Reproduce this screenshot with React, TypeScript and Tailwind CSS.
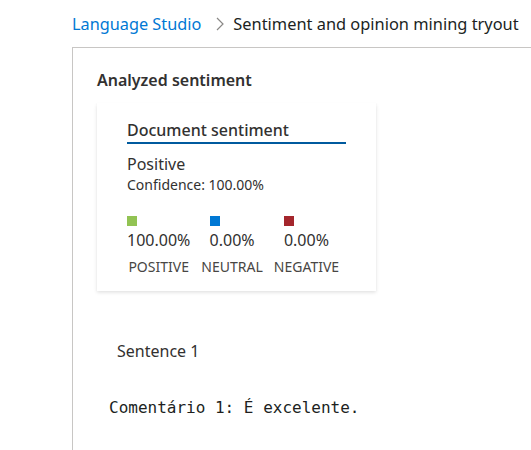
import React from "react";

export default function App() {
  const sans = { fontFamily: '"Noto Sans", "Open Sans", sans-serif' };
  const items = [
    { c: "#92c353", v: "100.00%", l: "POSITIVE" },
    { c: "#0078d4", v: "0.00%", l: "NEUTRAL" },
    { c: "#a4262c", v: "0.00%", l: "NEGATIVE" },
  ];
  return (
    <div className="w-[531px] h-[450px] bg-white overflow-hidden text-[#323130]" style={sans}>
      <div className="flex items-center h-[47px] pl-[72px] pt-[1px]">
        <span className="text-[16.3px] text-[#0078d4]">Language Studio</span>
        <svg width="10" height="14" viewBox="0 0 10 14" className="ml-[14px] mr-[8px]">
          <path d="M2 1 L8 7 L2 13" fill="none" stroke="#8a8886" strokeWidth="1.2" />
        </svg>
        <span className="text-[16.4px] text-[#201f1e] whitespace-nowrap">Sentiment and opinion mining tryout</span>
      </div>
      <div className="ml-[72px] border-l border-t border-[#c8c6c4] h-[403px] pl-[24px] pt-[20px]">
        <div className="text-[16px] font-semibold leading-[24px] text-[#323130]">Analyzed sentiment</div>
        <div className="mt-[11px] w-[279px] h-[188px] bg-white shadow-[0_1.6px_3.6px_rgba(0,0,0,0.13),0_0.3px_0.9px_rgba(0,0,0,0.11)] pl-[30px] pr-[30px] pt-[16px]">
          <div className="border-b-2 border-[#005a9e] pb-[1px] text-[16px] font-medium leading-[22px]">Document sentiment</div>
          <div className="mt-[9px] text-[16px] leading-[22px]">Positive</div>
          <div className="text-[14px] leading-[20px]">Confidence: 100.00%</div>
          <div className="flex mt-[21px] gap-[11px]">
            {items.map((d) => (
              <div key={d.l} className="flex flex-col items-center">
                <div className="flex flex-col items-start">
                  <div className="w-[10px] h-[10px]" style={{ background: d.c }} />
                  <div className="text-[16px] leading-[22px] mt-[3px]">{d.v}</div>
                </div>
                <div className="text-[14px] leading-[18px] mt-[7px] text-[#484644]">{d.l}</div>
              </div>
            ))}
          </div>
        </div>
        <div className="mt-[49px] pl-[20px] text-[16px] leading-[22px]">Sentence 1</div>
        <div className="mt-[35px] pl-[12px] text-[16px] leading-[22px] text-[#201f1e]" style={{ fontFamily: '"DejaVu Sans Mono", "Liberation Mono", monospace' }}>
          Comentário 1: É excelente.
        </div>
      </div>
    </div>
  );
}
